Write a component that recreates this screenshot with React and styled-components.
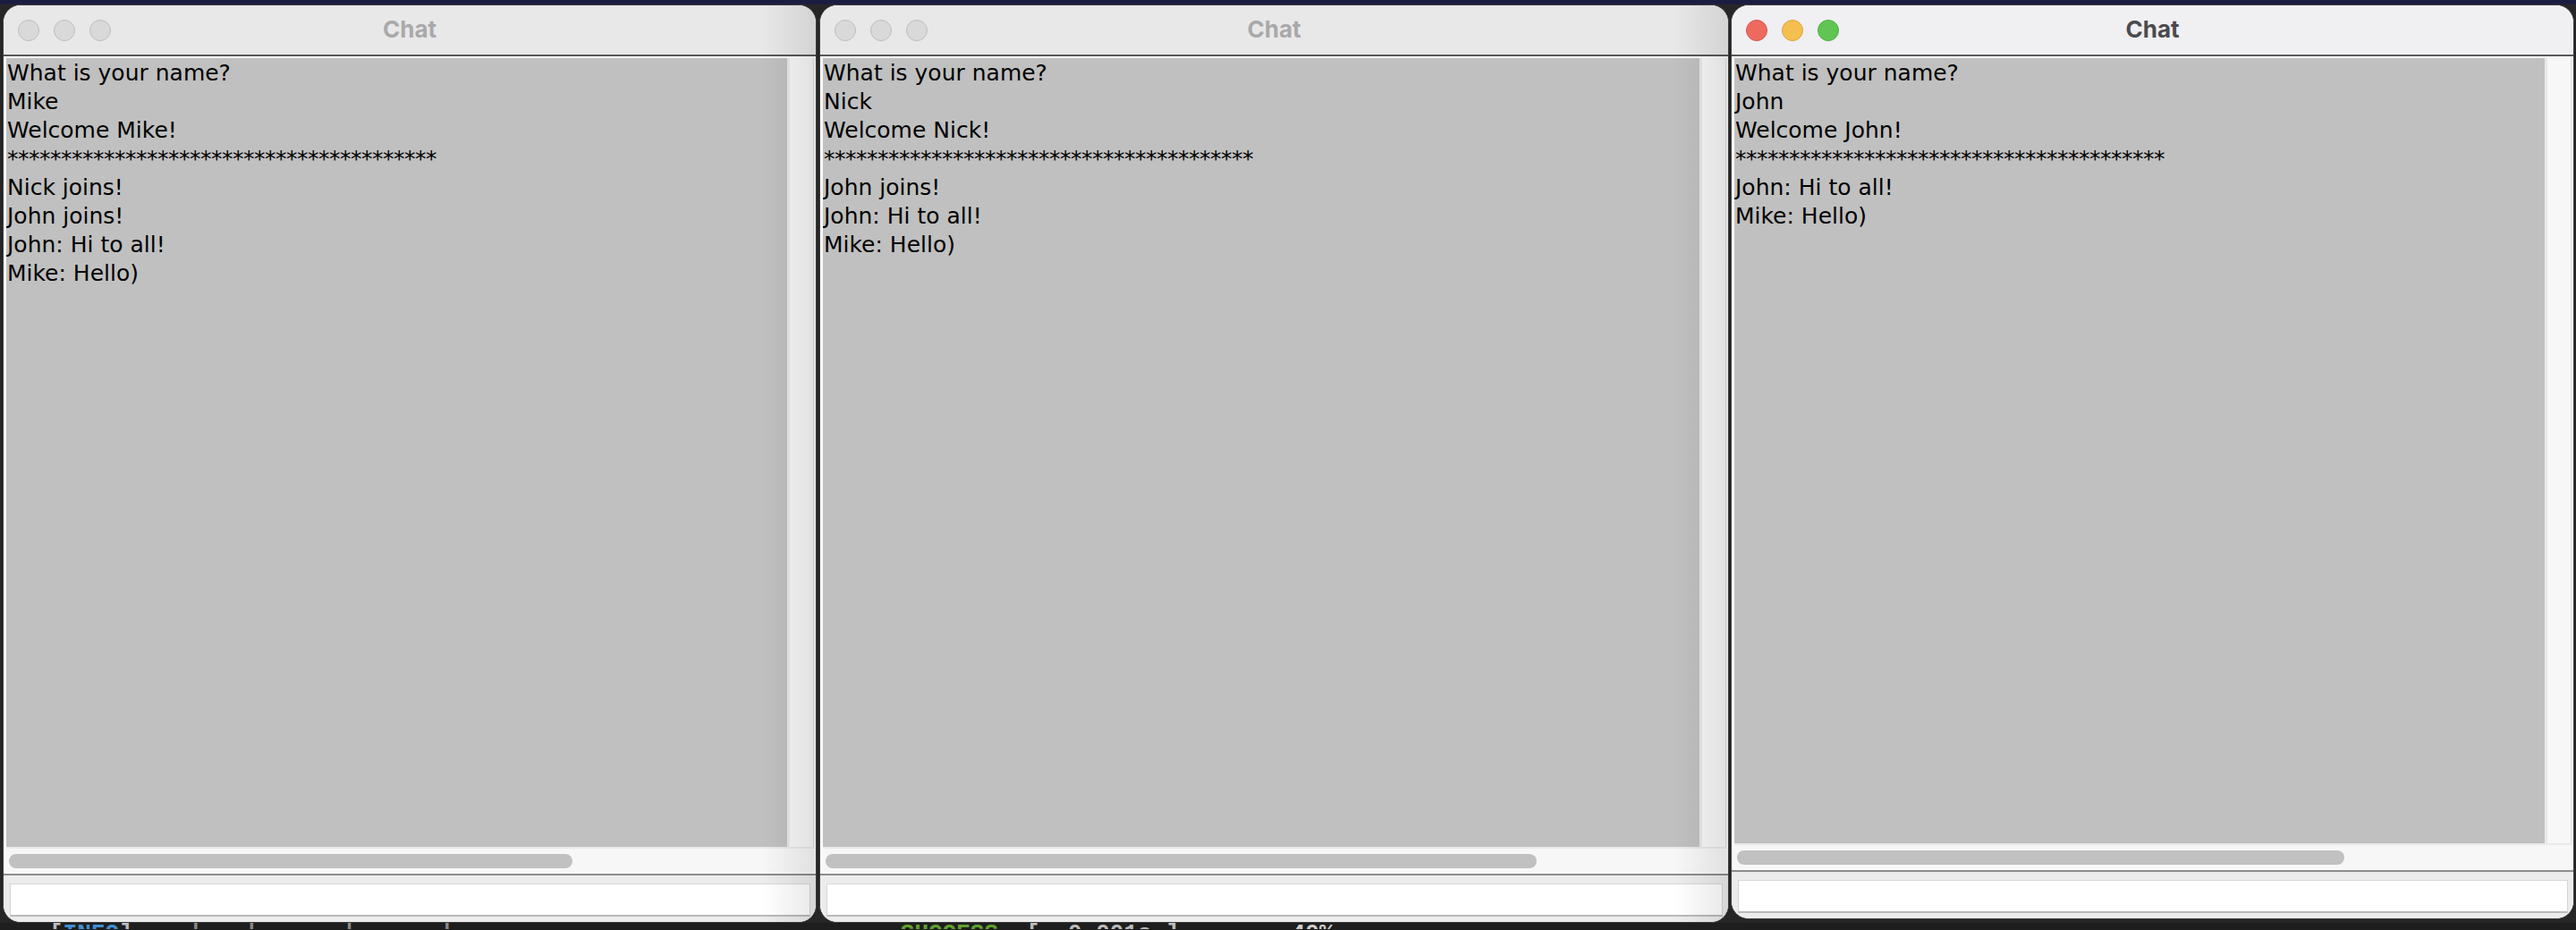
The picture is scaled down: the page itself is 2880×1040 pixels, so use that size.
import React from 'react';
import styled, { createGlobalStyle } from 'styled-components';

const GlobalStyle = createGlobalStyle`
  html, body {
    margin: 0;
    padding: 0;
    width: 2880px;
    height: 1040px;
    overflow: hidden;
    background: #1e1e1e;
  }
`;

const Desktop = styled.div`
  width: 2880px;
  height: 1040px;
  overflow: hidden;
  background: linear-gradient(to bottom, #1b1d40 0, #1b1d40 5px, #262626 5px, #262626 1032px, #1e1e1e 1032px);
  display: flex;
  flex-direction: column;
`;

const WindowRow = styled.div`
  display: flex;
  align-items: flex-start;
  padding: 5px 0 0 3px;
`;

const Window = styled.div`
  position: relative;
  box-sizing: border-box;
  width: ${p => p.$width}px;
  height: ${p => p.$height}px;
  margin-right: ${p => p.$gap}px;
  border: 1px solid #3d3d3d;
  border-radius: 20px;
  overflow: hidden;
  background: #ececec;
  display: flex;
  flex-direction: column;

  &::after {
    content: '';
    display: ${p => (p.$shaded ? 'block' : 'none')};
    position: absolute;
    top: 0;
    right: 0;
    bottom: 0;
    width: 60px;
    pointer-events: none;
    background: linear-gradient(to right, rgba(0, 0, 0, 0), rgba(0, 0, 0, 0.09));
  }
`;

const TitleBar = styled.div`
  height: 55px;
  flex: none;
  display: grid;
  grid-template-columns: 1fr auto 1fr;
  align-items: center;
  background: ${p => (p.$active ? '#f0eff2' : '#e9e8e9')};
`;

const Lights = styled.div`
  display: flex;
  gap: 16px;
  padding-left: 16px;
  margin-top: 1px;
`;

const Light = styled.span`
  box-sizing: border-box;
  width: 24px;
  height: 24px;
  border-radius: 50%;
  background: ${p => p.$fill};
  border: 1px solid ${p => p.$edge};
`;

const Title = styled.div`
  font-family: Inter, 'Liberation Sans', sans-serif;
  font-weight: 700;
  font-size: 26px;
  line-height: 30px;
  margin-top: -2px;
  color: ${p => (p.$active ? '#4b4b4d' : '#a9a9aa')};
`;

const Separator = styled.div`
  height: 2px;
  flex: none;
  background: ${p => p.$color};
`;

const ScrollPane = styled.div`
  flex: 1;
  min-height: 0;
  display: flex;
  flex-direction: column;
  padding: 2px 2px 1px 3px;
  background: #fbfbfb;
`;

const ViewRow = styled.div`
  flex: 1;
  min-height: 0;
  display: flex;
`;

const TextArea = styled.div`
  flex: 1;
  background: #c0c0c0;
  padding: 1px 1px 0;
  font-family: 'DejaVu Sans', Verdana, sans-serif;
  font-size: 25px;
  line-height: 32px;
  color: #000;
  white-space: pre;
  overflow: hidden;
`;

const Line = styled.div`
  height: 32px;
  letter-spacing: ${p => (p.$rule ? '-0.5px' : 'normal')};
`;

const VTrack = styled.div`
  width: 30px;
  flex: none;
  box-sizing: border-box;
  background: #f7f7f7;
  border-left: 3px solid #e9e9e9;
  border-right: 1px solid #dddddd;
`;

const HTrack = styled.div`
  height: 29px;
  flex: none;
  box-sizing: border-box;
  border-top: 2px solid #e9e9e9;
  background: #f7f7f7;
  padding: 6px 0 0 3px;
`;

const Thumb = styled.div`
  width: ${p => p.$width}px;
  height: 16px;
  border-radius: 8px;
  background: #c1c1c1;
`;

const InputBar = styled.div`
  height: 52px;
  flex: none;
  box-sizing: border-box;
  padding: 9px 6px 0 7px;
  background: #ececec;
`;

const InputField = styled.div`
  height: 37px;
  box-sizing: border-box;
  background: #ffffff;
  border: 1px solid #d6d6d6;
  border-bottom: 2px solid #b9b9b9;
`;

const Terminal = styled.div`
  height: 8px;
  overflow: hidden;
  padding-left: 55px;
  font-family: 'Liberation Mono', 'DejaVu Sans Mono', monospace;
  font-size: 26px;
  line-height: 26px;
  font-weight: 700;
  white-space: pre;
  color: #c8c8c8;
  margin-top: -1px;
`;

const Tone = styled.span`
  color: ${p => p.$color};
`;

const inactiveLights = [
  ['#d9d9d9', '#bdbdbd'],
  ['#d9d9d9', '#bdbdbd'],
  ['#d9d9d9', '#bdbdbd'],
];

const activeLights = [
  ['#ee6a5f', '#d3584d'],
  ['#f5bf4f', '#d9a441'],
  ['#61c554', '#4fae43'],
];

const stars = '*'.repeat(40);

const windows = [
  {
    width: 910,
    height: 1027,
    gap: 3,
    thumb: 630,
    shaded: true,
    lines: ['What is your name?', 'Mike', 'Welcome Mike!', stars, 'Nick joins!', 'John joins!', 'John: Hi to all!', 'Mike: Hello)'],
  },
  {
    width: 1017,
    height: 1027,
    gap: 2,
    thumb: 795,
    shaded: true,
    lines: ['What is your name?', 'Nick', 'Welcome Nick!', stars, 'John joins!', 'John: Hi to all!', 'Mike: Hello)'],
  },
  {
    width: 943,
    height: 1023,
    gap: 0,
    thumb: 679,
    active: true,
    lines: ['What is your name?', 'John', 'Welcome John!', stars, 'John: Hi to all!', 'Mike: Hello)'],
  },
];

const ChatWindow = ({ win }) => {
  const lights = win.active ? activeLights : inactiveLights;
  return (
    <Window $width={win.width} $height={win.height} $gap={win.gap} $shaded={win.shaded}>
      <TitleBar $active={win.active}>
        <Lights>
          {lights.map(([fill, edge], i) => (
            <Light key={i} $fill={fill} $edge={edge} />
          ))}
        </Lights>
        <Title $active={win.active}>Chat</Title>
        <div />
      </TitleBar>
      <Separator $color="#585858" />
      <ScrollPane>
        <ViewRow>
          <TextArea>
            {win.lines.map((line, i) => (
              <Line key={i} $rule={line === stars}>
                {line}
              </Line>
            ))}
          </TextArea>
          <VTrack />
        </ViewRow>
        <HTrack>
          <Thumb $width={win.thumb} />
        </HTrack>
      </ScrollPane>
      <Separator $color="#8d8d8d" />
      <InputBar>
        <InputField />
      </InputBar>
    </Window>
  );
};

export default function App() {
  return (
    <>
      <GlobalStyle />
      <Desktop>
        <WindowRow>
          {windows.map((win, i) => (
            <ChatWindow key={i} win={win} />
          ))}
        </WindowRow>
        <Terminal>
          <Tone $color="#bdbdbd">[</Tone>
          <Tone $color="#3f8fd6">INFO</Tone>
          <Tone $color="#bdbdbd">]</Tone>
          <Tone $color="#8a8a8a">{'    |   |      |  .   |'}</Tone>
          {' '.repeat(32)}
          <Tone $color="#5fa12e">SUCCESS</Tone>
          {'  '}
          <Tone $color="#bdbdbd">{'[  0.001s ]'}</Tone>
          {' '.repeat(8)}
          <Tone $color="#cfcfcf">40%</Tone>
        </Terminal>
      </Desktop>
    </>
  );
}
